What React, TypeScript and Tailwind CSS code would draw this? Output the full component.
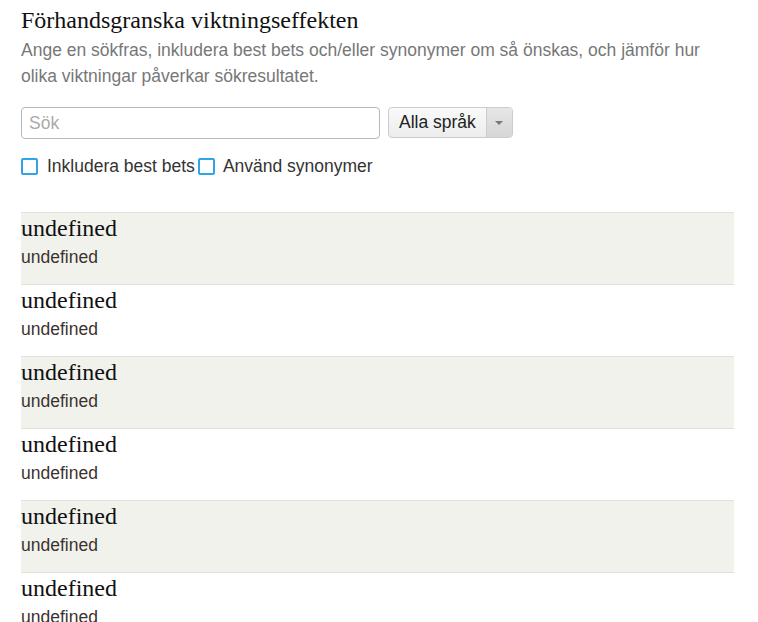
import React from "react";

const rows = [0, 1, 2, 3, 4, 5];

export default function App() {
  return (
    <div className="min-h-[622px] bg-white pl-[21px] pr-[24px] pt-[6px] text-[#333]" style={{ fontFamily: '"Liberation Sans", Arial, sans-serif' }}>
      <h1 className="text-[24px] leading-[28px] text-[#111]" style={{ fontFamily: '"Liberation Serif", Georgia, serif' }}>
        Förhandsgranska viktningseffekten
      </h1>
      <p className="mt-[3px] max-w-[690px] text-[17.5px] leading-[26px] text-[#777]">
        Ange en sökfras, inkludera best bets och/eller synonymer om så önskas, och jämför hur olika viktningar påverkar sökresultatet.
      </p>
      <div className="mt-[18px] flex items-start gap-[8px]">
        <div className="flex h-[32px] w-[359px] items-center rounded-[4px] border border-[#b8b8b8] px-[7px] text-[17.5px] text-[#aaa]">
          Sök
        </div>
        <div className="flex h-[31px] overflow-hidden rounded-[4px] border border-[#ccc] bg-gradient-to-b from-[#fafafa] to-[#ececec]">
          <div className="flex items-center px-[10px] text-[17.5px] text-[#222]">Alla språk</div>
          <div className="flex w-[26px] items-center justify-center border-l border-[#ccc] bg-gradient-to-b from-[#e6e6e6] to-[#d6d6d6]">
            <svg width="8" height="4" viewBox="0 0 8 4"><path d="M0 0h8L4 4z" fill="#777" /></svg>
          </div>
        </div>
      </div>
      <div className="mt-[17px] flex h-[20px] items-center text-[17.5px] text-[#333]">
        <span className="inline-block h-[17px] w-[17px] rounded-[2px] border-[2px] border-[#2fa4e7] bg-white" />
        <span className="ml-[9px]">Inkludera best bets</span>
        <span className="ml-[3px] inline-block h-[17px] w-[17px] rounded-[2px] border-[2px] border-[#2fa4e7] bg-white" />
        <span className="ml-[8px]">Använd synonymer</span>
      </div>
      <div className="mt-[36px] w-[713px]">
        {rows.map((i) => (
          <div key={i} className={`h-[72px] border-t border-[#e2e0d8] ${i % 2 === 0 ? "bg-[#f2f2ed]" : "bg-white"}`}>
            <div className="pt-[1px] text-[24px] leading-[28px] text-[#111]" style={{ fontFamily: '"Liberation Serif", "Times New Roman", serif' }}>
              undefined
            </div>
            <div className="mt-[5px] text-[17.5px] leading-[20px] text-[#3d3230]">undefined</div>
          </div>
        ))}
      </div>
    </div>
  );
}
